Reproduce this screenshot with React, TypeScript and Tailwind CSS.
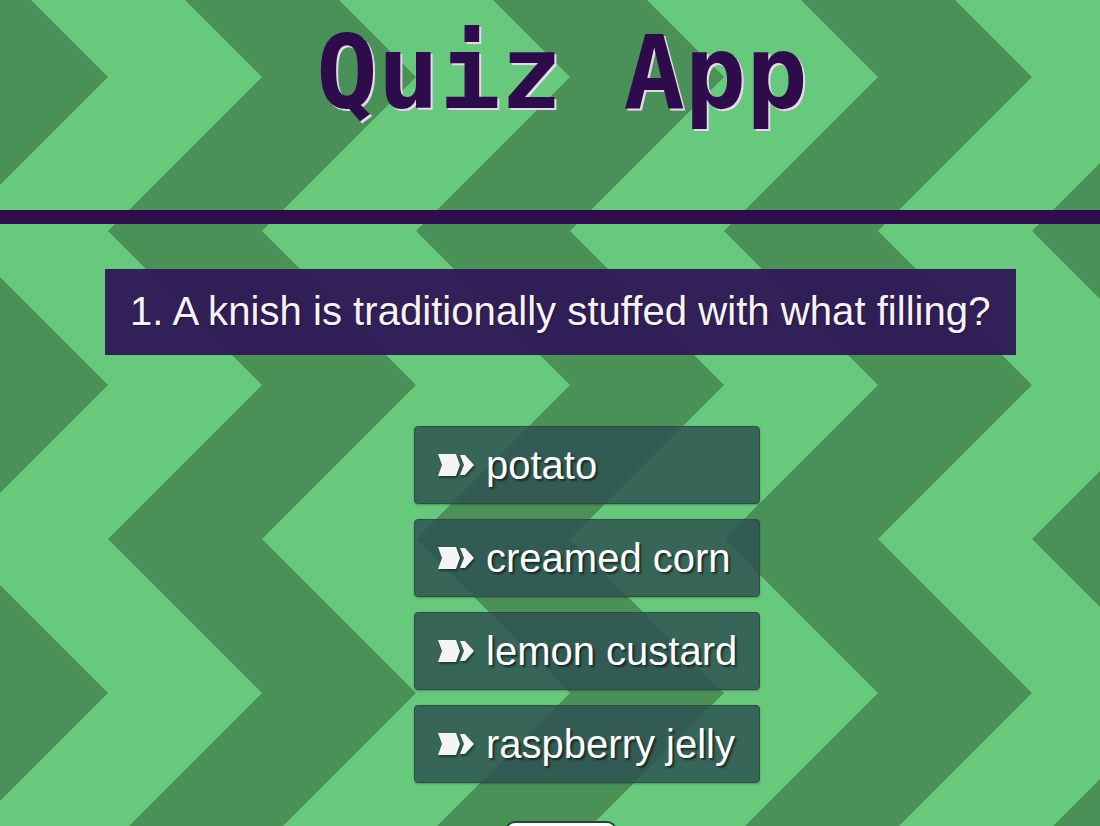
const answers = ["potato", "creamed corn", "lemon custard", "raspberry jelly"];

// fletched arrow shown before each answer
const ArrowIcon = () => (
  <svg
    width="36"
    height="22"
    viewBox="0 0 36 22"
    className="shrink-0 drop-shadow-[1px_2px_1px_rgba(0,0,0,0.45)]"
  >
    <polygon points="0,0 18,0 22,11 18,22 0,22 4,11" fill="#f4f4f4" />
    <polygon points="22,1 27,1 36,11 27,21 22,21 26,11" fill="#f4f4f4" />
  </svg>
);

// chevron stripes behind the whole page
const Chevrons = () => (
  <svg className="absolute inset-0 h-full w-full" aria-hidden>
    <defs>
      <pattern
        id="chevrons"
        x="108"
        y="-77"
        width="308"
        height="308"
        patternUnits="userSpaceOnUse"
      >
        <rect width="308" height="308" fill="#66c97c" />
        <polygon points="0,0 154,0 308,154 154,308 0,308 154,154" fill="#4a9158" />
      </pattern>
    </defs>
    <rect width="100%" height="100%" fill="url(#chevrons)" />
  </svg>
);

export default function App() {
  return (
    <div className="relative min-h-screen overflow-hidden">
      <Chevrons />
      <div className="relative flex flex-col">
        <header className="box-border h-[224px] border-b-[14px] border-[#2f0c4b] pl-[24px] pt-[22px] text-center">
          <h1 className="font-['DejaVu_Sans_Mono',monospace] text-[102px] font-bold leading-[102px] text-[#2e0b4b] [text-shadow:2px_2px_0_#ead6ee]">
            Quiz App
          </h1>
        </header>

        <main className="flex flex-col items-start font-['Liberation_Sans',Arial,sans-serif]">
          <div className="ml-[105px] mt-[45px] flex h-[86px] w-fit items-center whitespace-nowrap bg-[#2e1856]/95 px-[25px] text-[40.15px] text-[#f6f2f8] [text-shadow:1px_1px_1px_rgba(0,0,0,0.4)]">
            1. A knish is traditionally stuffed with what filling?
          </div>

          <ul className="ml-[414px] mt-[71px] flex w-[346px] flex-col gap-[15px]">
            {answers.map((answer) => (
              <li key={answer}>
                <button className="flex h-[78px] w-full items-center gap-[12px] rounded-[4px] border border-[#2b4e46] bg-[#2d5052]/[0.82] pl-[23px] text-left text-[40px] text-white shadow-[0_1px_2px_rgba(0,0,0,0.25)] [text-shadow:2px_2px_2px_rgba(0,0,0,0.55)]">
                  <ArrowIcon />
                  <span>{answer}</span>
                </button>
              </li>
            ))}
          </ul>

          <button className="mb-[20px] ml-[505px] mt-[38px] h-[52px] w-[112px] rounded-[10px] border-2 border-[#23423b] bg-white text-[20px] text-[#23423b]">
            Submit
          </button>
        </main>
      </div>
    </div>
  );
}
